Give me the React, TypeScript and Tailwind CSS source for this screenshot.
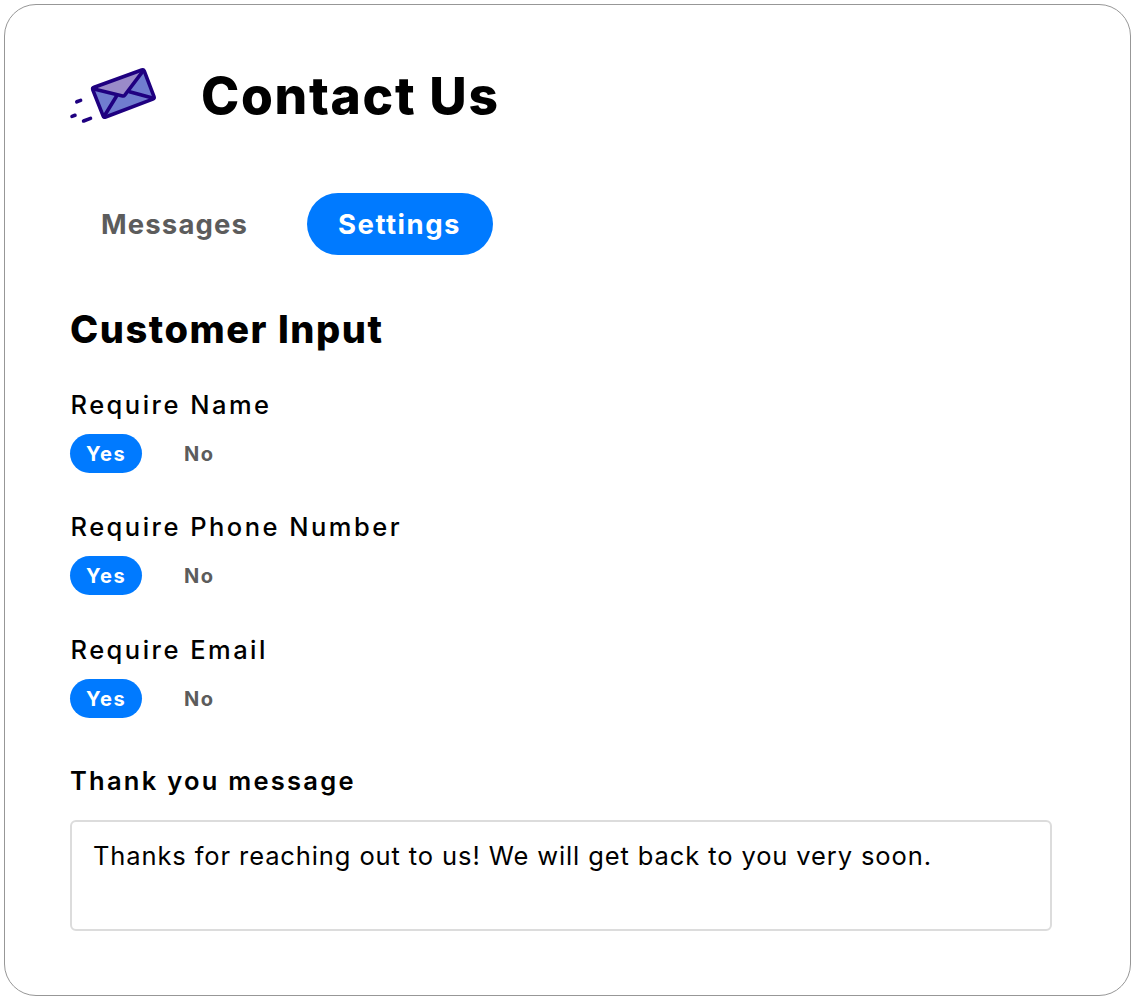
import { useState } from "react";

interface ToggleProps {
  label: string;
  className?: string;
}

const YesNoToggle = ({ label, className = "" }: ToggleProps) => {
  const [required, setRequired] = useState(true);
  const active = "bg-[#007aff] text-white";
  const idle = "text-[#5c5c5c]";

  return (
    <div className={className}>
      <h3 className="pl-[0.5px] text-[25.5px] leading-8 font-medium tracking-[2.48px]">
        {label}
      </h3>
      <div className="mt-[13px] flex gap-[26px] text-[20px] leading-[40px] font-bold tracking-[1.6px]">
        <button
          onClick={() => setRequired(true)}
          className={`h-[39px] w-[72px] rounded-full pl-4 text-left ${required ? active : idle}`}
        >
          Yes
        </button>
        <button
          onClick={() => setRequired(false)}
          className={`h-[39px] rounded-full px-4 ${required ? idle : active}`}
        >
          No
        </button>
      </div>
    </div>
  );
};

const EnvelopeIcon = () => (
  <svg
    width="88"
    height="57"
    viewBox="0 0 88 57"
    fill="none"
    className="overflow-visible"
  >
    <path d="M22.8 20.3L73.7 1.8L84.3 30.5L33.7 49.3Z" fill="#707dcf" />
    <path d="M22.8 20.3L73.7 1.8L54 28Z" fill="#9a8bc9" />
    <g
      stroke="#1f0080"
      strokeWidth="3.6"
      strokeLinecap="round"
      strokeLinejoin="round"
    >
      <path d="M24.2 19.3L71.7 2Q73.6 1.3 74.3 3.2L84 28.6Q84.7 30.4 82.8 31.1L35.6 49Q33.8 49.7 33.1 47.8L22.8 21.8Q22.2 20 24.2 19.3Z" />
      <path d="M23 20.8L52.6 28Q53.9 28.3 54.7 27.2L73.5 2.3" />
      <path d="M34 48.5L46.3 28.5M83.5 30.2L59.5 23.7" />
      <path d="M6.8 33.8L10.6 32.4M2 48.4L5 47.3M13.6 53L20.5 50.4" />
    </g>
  </svg>
);

export default function App() {
  return (
    <div className="h-[1000px] bg-white p-1 font-[Inter,sans-serif] text-black">
      <main className="h-[992px] rounded-[32px] border border-[#979797] px-[65px] pt-[59px]">
        <header className="flex h-[64px] items-center">
          <EnvelopeIcon />
          <h1 className="-mt-0.5 ml-[43px] text-[51.5px] leading-[64px] font-extrabold tracking-[1.7px]">
            Contact Us
          </h1>
        </header>

        <nav className="mt-[65px] flex gap-[28px] text-[27.5px] leading-[63px] font-bold tracking-[1.15px]">
          <button className="h-[62px] w-[209px] rounded-full pl-[31px] text-left text-[#5c5c5c]">
            Messages
          </button>
          <button className="h-[62px] w-[186px] rounded-full bg-[#007aff] pl-[31px] text-left tracking-[1.5px] text-white">
            Settings
          </button>
        </nav>

        <h2 className="mt-[50px] text-[38px] leading-[48px] font-extrabold tracking-[1.53px]">
          Customer Input
        </h2>
        <YesNoToggle label="Require Name" className="mt-[36px]" />
        <YesNoToggle label="Require Phone Number" className="mt-[38px]" />
        <YesNoToggle label="Require Email" className="mt-[39px]" />

        <label className="mt-[47px] block text-[25.5px] leading-8 font-semibold tracking-[2.25px]">
          Thank you message
        </label>
        <textarea
          className="mt-[23px] block h-[111px] w-[982px] resize-none rounded-[6px] border-2 border-[#dcdcdc] px-[21px] py-[18px] text-[25.5px] leading-[32px] tracking-[0.89px] outline-none"
          defaultValue="Thanks for reaching out to us! We will get back to you very soon."
        />
      </main>
    </div>
  );
}
